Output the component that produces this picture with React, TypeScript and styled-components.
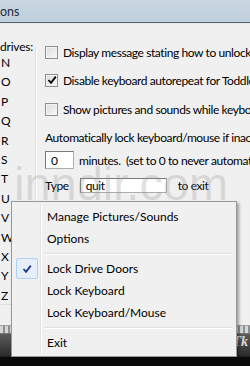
import styled, { createGlobalStyle } from "styled-components";

const GlobalStyle = createGlobalStyle`
  html, body {
    margin: 0;
    padding: 0;
    background: #f0f0f0;
  }
`;

const Screen = styled.div`
  position: relative;
  width: 250px;
  height: 366px;
  overflow: hidden;
  display: flex;
  flex-direction: column;
  font-family: Lato, "Noto Sans", sans-serif;
  font-size: 12px;
  color: #000;
  background: #f0f0f0;
`;

const TitleBar = styled.div`
  height: 22px;
  flex-shrink: 0;
  display: flex;
  align-items: center;
  background: linear-gradient(180deg, #c9d7e2 0%, #bfcfdc 100%);
  border-bottom: 1px solid #59636c;
  box-shadow: 0 1px 0 #e4e9ed;
  color: #1d2d3a;
  font-size: 12.5px;
  white-space: nowrap;
`;

const Body = styled.div`
  display: flex;
  height: 301px;
  flex-shrink: 0;
  margin-top: 1px;
  border-bottom: 1px solid #a0a0a0;
`;

const DrivesBox = styled.div`
  width: 35px;
  flex-shrink: 0;
  margin-top: 23px;
  height: 257px;
  border-right: 1px solid #d5dfe5;
  border-bottom: 1px solid #d5dfe5;
  box-shadow: 1px 0 0 #fff;
  display: flex;
  flex-direction: column;
`;

const LegendRow = styled.div`
  display: flex;
  align-items: center;
  height: 13px;
  margin-top: -7px;
  white-space: nowrap;
  letter-spacing: -0.2px;
`;

const LegendLine = styled.div`
  flex: 1;
  height: 1px;
  margin-left: 2px;
  margin-top: 1px;
  background: #d5dfe5;
`;

const DriveList = styled.ul`
  list-style: none;
  margin: 0;
  padding: 0 0 0 1px;
`;

const Drive = styled.li`
  height: 19.4px;
  line-height: 19.4px;
`;

const Options = styled.div`
  flex: 1;
  padding: 20px 0 0 9px;
  display: flex;
  flex-direction: column;
  white-space: nowrap;
  letter-spacing: -0.4px;
`;

const Row = styled.div<{ $top: number; $h?: number }>`
  display: flex;
  align-items: center;
  gap: 5px;
  height: ${(p) => p.$h ?? 16}px;
  margin-top: ${(p) => p.$top}px;
`;

const CheckBox = styled.span`
  width: 11px;
  height: 11px;
  flex-shrink: 0;
  border: 1px solid #8e8f8f;
  background: linear-gradient(135deg, #dcdcdc 0%, #f7f7f7 100%);
  box-shadow: inset 0 0 0 1px #f4f4f4;
  display: flex;
  align-items: center;
  justify-content: center;
`;

const Field = styled.span<{ $w: number; $h: number; $gap: number }>`
  width: ${(p) => p.$w}px;
  height: ${(p) => p.$h}px;
  margin: 0 ${(p) => p.$gap}px;
  flex-shrink: 0;
  box-sizing: border-box;
  display: flex;
  align-items: center;
  padding-left: 5px;
  background: #fff;
  border: 1px solid #abadb3;
  border-top-color: #7a7a7a;
  border-left-color: #7a7a7a;
`;

const Menu = styled.div`
  position: absolute;
  left: 11px;
  top: 201px;
  width: 220px;
  padding: 3px 2px;
  background: #f0f0f0;
  border: 1px solid #979797;
  box-shadow: 2px 2px 3px rgba(0, 0, 0, 0.35);
  white-space: nowrap;
  z-index: 2;
  &::before {
    content: "";
    position: absolute;
    left: 28px;
    top: 2px;
    bottom: 2px;
    width: 1px;
    background: #e2e3e3;
    box-shadow: 1px 0 0 #fff;
  }
`;

const Item = styled.div`
  position: relative;
  height: 22px;
  display: flex;
  align-items: center;
  padding-left: 33px;
`;

const CheckMark = styled.span`
  position: absolute;
  left: 2px;
  top: 1px;
  width: 20px;
  height: 19px;
  border: 1px solid #aecff7;
  border-radius: 2px;
  background: #e6eef8;
  display: flex;
  align-items: center;
  justify-content: center;
`;

const Separator = styled.div`
  height: 1px;
  margin: 4px 2px 2px 31px;
  background: #e0e0e0;
  border-bottom: 1px solid #fff;
`;

const Taskbar = styled.div`
  flex: 1;
  display: flex;
  flex-direction: column;
`;

const TaskStrip = styled.div`
  height: 7px;
  background: repeating-linear-gradient(90deg, #d6d6d6 0 3px, #8a8f96 3px 5px);
  border-bottom: 1px solid #777;
`;

const TaskDark = styled.div`
  flex: 1;
  background: linear-gradient(180deg, #5b5b5b 0%, #2b2b2b 70%, #0a0a0a 71%, #0a0a0a 100%);
  display: flex;
  justify-content: flex-end;
  align-items: flex-start;
  padding-right: 2px;
  color: #d8d8d8;
  font-style: italic;
  font-family: "Liberation Serif", serif;
  font-size: 14px;
  font-weight: bold;
`;

const Watermark = styled.div`
  position: absolute;
  left: 14px;
  top: 156px;
  font-family: "Liberation Sans", Arial, sans-serif;
  font-size: 47px;
  color: rgba(150, 150, 150, 0.28);
  pointer-events: none;
  z-index: 1;
`;

const Tick = ({ color }: { color: string }) => (
  <svg width="10" height="10" viewBox="0 0 10 10">
    <path d="M1.5 5 L4 7.8 L8.8 1.6" fill="none" stroke={color} strokeWidth="1.8" />
  </svg>
);

const drives = ["N", "O", "P", "Q", "R", "S", "T", "U", "V", "W", "X", "Y", "Z"];

const App = () => {
  return (
    <Screen>
      <GlobalStyle />
      <TitleBar>ons</TitleBar>
      <Body>
        <DrivesBox>
          <LegendRow>
            drives:
            <LegendLine />
          </LegendRow>
          <DriveList>
            {drives.map((d) => (
              <Drive key={d}>{d}</Drive>
            ))}
          </DriveList>
        </DrivesBox>
        <Options>
          <Row $top={0}>
            <CheckBox />
            Display message stating how to unlock keyboard
          </Row>
          <Row $top={12}>
            <CheckBox>
              <Tick color="#000" />
            </CheckBox>
            Disable keyboard autorepeat for Toddlers
          </Row>
          <Row $top={13}>
            <CheckBox />
            Show pictures and sounds while keyboard is locked
          </Row>
          <Row $top={12}>Automatically lock keyboard/mouse if inactive for</Row>
          <Row $top={6} $h={18}>
            <Field $w={29} $h={18} $gap={0}>0</Field>
            minutes.&nbsp;&nbsp;(set to 0 to never automatically lock)
          </Row>
          <Row $top={8}>
            Type
            <Field $w={87} $h={15} $gap={6}>quit</Field>
            to exit
          </Row>
        </Options>
      </Body>
      <Taskbar>
        <TaskStrip />
        <TaskDark>Tk</TaskDark>
      </Taskbar>
      <Watermark>inndir.com</Watermark>
      <Menu>
        <Item>Manage Pictures/Sounds</Item>
        <Item>Options</Item>
        <Separator />
        <Item>
          <CheckMark>
            <Tick color="#1f3192" />
          </CheckMark>
          Lock Drive Doors
        </Item>
        <Item>Lock Keyboard</Item>
        <Item>Lock Keyboard/Mouse</Item>
        <Separator />
        <Item>Exit</Item>
      </Menu>
    </Screen>
  );
};

export default App;
